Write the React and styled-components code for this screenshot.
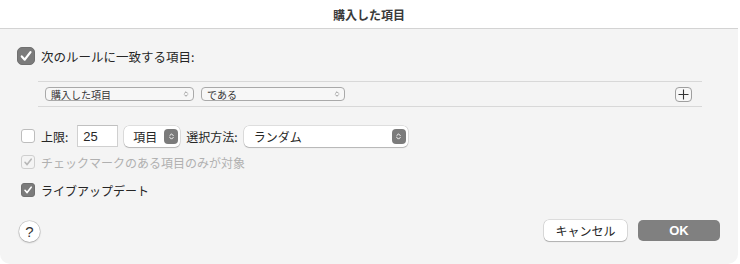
import React from "react";
import styled, { createGlobalStyle } from "styled-components";

const GlobalStyle = createGlobalStyle`
  html, body {
    margin: 0;
    padding: 0;
    background: #ffffff;
  }
  body {
    font-family: "Noto Sans CJK JP", "Liberation Sans", sans-serif;
    font-size: 12px;
    color: #262626;
  }
`;

const Window = styled.div`
  width: 738px;
  height: 264px;
  display: flex;
  flex-direction: column;
`;

const TitleBar = styled.div`
  height: 28px;
  border-bottom: 1px solid #d3d3d3;
  display: flex;
  align-items: center;
  justify-content: center;
  font-size: 12px;
  font-weight: bold;
  color: #3a3a3a;
  background: #ffffff;
`;

const Body = styled.div`
  flex: 1;
  background: #f4f4f4;
  border-radius: 0 0 10px 10px;
  padding: 18px 17px 0 17px;
  display: flex;
  flex-direction: column;
`;

const Row = styled.label`
  display: flex;
  align-items: center;
  gap: 6px;
  height: ${(p) => p.$h || 18}px;
  margin-top: ${(p) => p.$mt || 0}px;
  padding-left: ${(p) => p.$pl || 0}px;
  font-size: ${(p) => p.$fs || 12}px;
  color: ${(p) => (p.$disabled ? "#b0b0b0" : "#262626")};
  white-space: nowrap;
`;

const Box = styled.span`
  width: ${(p) => p.$size}px;
  height: ${(p) => p.$size}px;
  border-radius: ${(p) => (p.$size > 15 ? 5 : 3)}px;
  box-sizing: border-box;
  flex-shrink: 0;
  display: flex;
  align-items: center;
  justify-content: center;
  background: ${(p) =>
    p.$disabled ? "#f4f4f4" : p.$checked ? "#7b7b7b" : "#ffffff"};
  border: 1px solid
    ${(p) => (p.$disabled ? "#cfcfcf" : p.$checked ? "#707070" : "#bdbdbd")};
`;

const Check = ({ size = 14, checked, disabled }) => (
  <Box $size={size} $checked={checked} $disabled={disabled}>
    {checked && (
      <svg width={size - 4} height={size - 4} viewBox="0 0 10 10">
        <path
          d="M2 5.3 L4.1 7.6 L8.2 2.2"
          fill="none"
          stroke={disabled ? "#b8b8b8" : "#ffffff"}
          strokeWidth="1.6"
          strokeLinecap="round"
          strokeLinejoin="round"
        />
      </svg>
    )}
  </Box>
);

const RuleBox = styled.div`
  margin: 16px 19px 0 21px;
  border-top: 1px solid #d8d8d8;
  border-bottom: 1px solid #d8d8d8;
  height: 24px;
  display: flex;
  align-items: center;
  padding: 0 10px 0 7px;
  gap: 7px;
`;

const SmallPopup = styled.div`
  width: ${(p) => p.$w}px;
  height: 14px;
  box-sizing: border-box;
  border: 1px solid #a9a9a9;
  border-radius: 4px;
  background: #f7f7f7;
  display: flex;
  align-items: center;
  justify-content: space-between;
  padding: 0 4px 0 5px;
  font-size: 10px;
  color: #333;
`;

const Spacer = styled.div`
  flex: 1;
`;

const PlusButton = styled.div`
  width: 17px;
  height: 15px;
  box-sizing: border-box;
  border: 1px solid #9f9f9f;
  border-radius: 4px;
  background: #f7f7f7;
  display: flex;
  align-items: center;
  justify-content: center;
`;

const Input = styled.div`
  width: 41px;
  height: 22px;
  box-sizing: border-box;
  margin-left: 3px;
  background: #ffffff;
  border: 1px solid #d0d0d0;
  border-top-color: #c0c0c0;
  display: flex;
  align-items: center;
  padding-left: 5px;
  font-family: "Liberation Sans", "Noto Sans CJK JP", sans-serif;
  font-size: 13px;
`;

const Popup = styled.div`
  width: ${(p) => p.$w}px;
  height: 21px;
  box-sizing: border-box;
  background: #ffffff;
  border-radius: 5px;
  box-shadow: 0 0 0 0.5px rgba(0, 0, 0, 0.18), 0 1px 1px rgba(0, 0, 0, 0.18);
  display: flex;
  align-items: center;
  justify-content: space-between;
  padding: 0 2px 0 ${(p) => p.$pl || 8}px;
`;

const Stepper = styled.span`
  width: 14px;
  height: 15px;
  border-radius: 4px;
  background: #7b7b7b;
  display: flex;
  align-items: center;
  justify-content: center;
`;

const Footer = styled.div`
  margin-top: auto;
  height: 44px;
  display: flex;
  align-items: flex-start;
  padding-right: 1px;
`;

const HelpButton = styled.div`
  width: 21px;
  height: 21px;
  border-radius: 50%;
  background: #ffffff;
  box-shadow: 0 0 0 0.5px rgba(0, 0, 0, 0.2), 0 1px 2px rgba(0, 0, 0, 0.2);
  display: flex;
  align-items: center;
  justify-content: center;
  font-family: "Liberation Sans", sans-serif;
  font-size: 15px;
  color: #333;
  margin: 1px 0 0 2px;
`;

const Button = styled.div`
  width: ${(p) => p.$w}px;
  height: 21px;
  border-radius: 5px;
  display: flex;
  align-items: center;
  justify-content: center;
  margin-left: ${(p) => p.$ml || 0}px;
  background: ${(p) => (p.$primary ? "#808080" : "#ffffff")};
  color: ${(p) => (p.$primary ? "#ffffff" : "#262626")};
  font-weight: ${(p) => (p.$primary ? "bold" : "normal")};
  font-size: ${(p) => (p.$primary ? 13 : 12)}px;
  font-family: ${(p) =>
    p.$primary ? '"Liberation Sans", sans-serif' : "inherit"};
  box-shadow: ${(p) =>
    p.$primary
      ? "none"
      : "0 0 0 0.5px rgba(0,0,0,0.2), 0 1px 1px rgba(0,0,0,0.2)"};
`;

const UpDown = ({ color = "#888", size = 8 }) => (
  <svg width={size} height={size + 2} viewBox="0 0 8 10">
    <path
      d="M2 4 L4 2 L6 4 M2 6 L4 8 L6 6"
      fill="none"
      stroke={color}
      strokeWidth="1.1"
      strokeLinecap="round"
      strokeLinejoin="round"
    />
  </svg>
);

const App = () => (
  <>
    <GlobalStyle />
    <Window>
      <TitleBar>購入した項目</TitleBar>
      <Body>
        <Row $h={18} $fs={12.5}>
          <Check size={18} checked />
          <span>次のルールに一致する項目:</span>
        </Row>

        <RuleBox>
          <SmallPopup $w={149}>
            <span>購入した項目</span>
            <UpDown size={6} />
          </SmallPopup>
          <SmallPopup $w={144}>
            <span>である</span>
            <UpDown size={6} />
          </SmallPopup>
          <Spacer />
          <PlusButton>
            <svg width="11" height="11" viewBox="0 0 11 11">
              <path d="M5.5 0.5 V10.5 M0.5 5.5 H10.5" stroke="#333" strokeWidth="1.1" />
            </svg>
          </PlusButton>
        </RuleBox>

        <Row $h={22} $mt={18} $pl={4}>
          <Check size={14} />
          <span>上限:</span>
          <Input>25</Input>
          <Popup $w={56} $pl={9}>
            <span>項目</span>
            <Stepper>
              <UpDown color="#ffffff" size={7} />
            </Stepper>
          </Popup>
          <span>選択方法:</span>
          <Popup $w={164} $pl={10}>
            <span>ランダム</span>
            <Stepper>
              <UpDown color="#ffffff" size={7} />
            </Stepper>
          </Popup>
        </Row>

        <Row $h={18} $mt={6} $pl={4} $disabled>
          <Check size={14} checked disabled />
          <span>チェックマークのある項目のみが対象</span>
        </Row>

        <Row $h={18} $mt={10} $pl={4}>
          <Check size={14} checked />
          <span>ライブアップデート</span>
        </Row>

        <Footer>
          <HelpButton>?</HelpButton>
          <Spacer />
          <Button $w={83}>キャンセル</Button>
          <Button $w={82} $ml={11} $primary>
            OK
          </Button>
        </Footer>
      </Body>
    </Window>
  </>
);

export default App;
